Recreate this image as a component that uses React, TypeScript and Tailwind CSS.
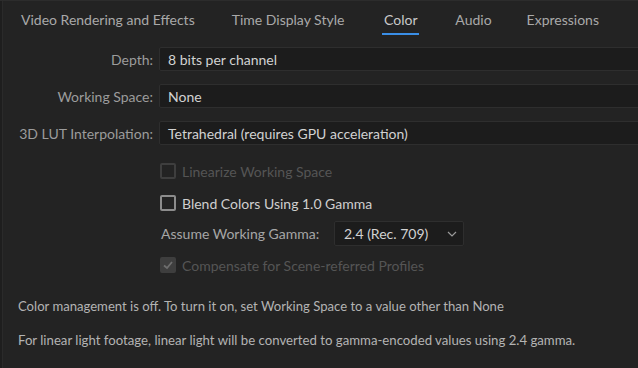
import React from "react";

const font = { fontFamily: "Lato, 'Open Sans', sans-serif" };

function Chevron() {
  return (
    <svg width="10" height="6" viewBox="0 0 10 6" fill="none">
      <path d="M1 1 L5 5 L9 1" stroke="#9a9a9a" strokeWidth="1.2" />
    </svg>
  );
}

function Row({ label, value }: { label: string; value: string }) {
  return (
    <div className="flex items-center h-[24px]">
      <div className="w-[154px] text-right text-[14px] text-[#9c9c9c] whitespace-nowrap">{label}</div>
      <div className="ml-[6px] flex-1 h-[24px] -mr-[10px] bg-[#1c1c1c] border border-[#2e2e2e] rounded-[2px] flex items-center pl-[8px] text-[14px] text-[#d2d2d2] whitespace-nowrap">
        {value}
      </div>
    </div>
  );
}

function Check({ label, disabled, checked }: { label: string; disabled?: boolean; checked?: boolean }) {
  return (
    <div className="flex items-center h-[20px] pl-[161px]">
      <div
        className={
          "w-[16px] h-[16px] rounded-[2px] border-2 flex items-center justify-center " +
          (disabled ? "border-[#3e3e3e] " : "border-[#8c8c8c] ") +
          (checked ? "bg-[#3e3e3e]" : "")
        }
      >
        {checked && (
          <svg width="12" height="12" viewBox="0 0 12 12" fill="none">
            <path d="M2 6.5 L5 9 L10 3" stroke="#6e6e6e" strokeWidth="1.8" />
          </svg>
        )}
      </div>
      <span className={"ml-[6px] text-[14px] whitespace-nowrap " + (disabled ? "text-[#555555]" : "text-[#cfcfcf]")}>
        {label}
      </span>
    </div>
  );
}

export default function App() {
  return (
    <div style={font} className="w-[638px] h-[368px] overflow-hidden bg-[#232323] border-t border-[#2c2c2c] flex">
      <div className="w-[3px] bg-[#1e1e1e] border-r border-[#2a2a2a]" />
      <div className="flex-1 flex flex-col">
        <div className="flex items-start h-[46px] pl-[18px] text-[14px] text-[#a9a9a9] pt-[8px]">
          <div className="whitespace-nowrap">Video Rendering and Effects</div>
          <div className="whitespace-nowrap ml-[37px]">Time Display Style</div>
          <div className="flex flex-col items-center ml-[38px]">
            <div className="whitespace-nowrap text-[#c9c9c9]">Color</div>
            <div className="mt-[3px] h-[2px] w-[37px] bg-[#3a8ee6]" />
          </div>
          <div className="whitespace-nowrap ml-[36px]">Audio</div>
          <div className="whitespace-nowrap ml-[35px]">Expressions</div>
        </div>
        <div className="flex flex-col gap-[13px] -ml-[4px]">
          <Row label="Depth:" value="8 bits per channel" />
          <Row label="Working Space:" value="None" />
          <Row label="3D LUT Interpolation:" value="Tetrahedral (requires GPU acceleration)" />
        </div>
        <div className="flex flex-col -ml-[4px] mt-[16px]">
          <Check label="Linearize Working Space" disabled />
          <div className="h-[12px]" />
          <Check label="Blend Colors Using 1.0 Gamma" />
          <div className="flex items-center h-[25px] mt-[8px] pl-[162px]">
            <span className="text-[14px] text-[#a6a6a6] whitespace-nowrap w-[170px]">Assume Working Gamma:</span>
            <div className="ml-[3px] w-[130px] h-[25px] bg-[#1c1c1c] border border-[#2e2e2e] rounded-[2px] flex items-center justify-between pl-[9px] pr-[6px] text-[14px] text-[#d2d2d2]">
              <span>2.4 (Rec. 709)</span>
              <Chevron />
            </div>
          </div>
          <div className="h-[9px]" />
          <Check label="Compensate for Scene-referred Profiles" disabled checked />
        </div>
        <div className="mt-[22px] pl-[15px] text-[13.1px] text-[#b3b3b3] whitespace-nowrap">
          Color management is off. To turn it on, set Working Space to a value other than None
        </div>
        <div className="mt-[14px] pl-[15px] text-[13.2px] text-[#b3b3b3] whitespace-nowrap">
          For linear light footage, linear light will be converted to gamma-encoded values using 2.4 gamma.
        </div>
      </div>
    </div>
  );
}
